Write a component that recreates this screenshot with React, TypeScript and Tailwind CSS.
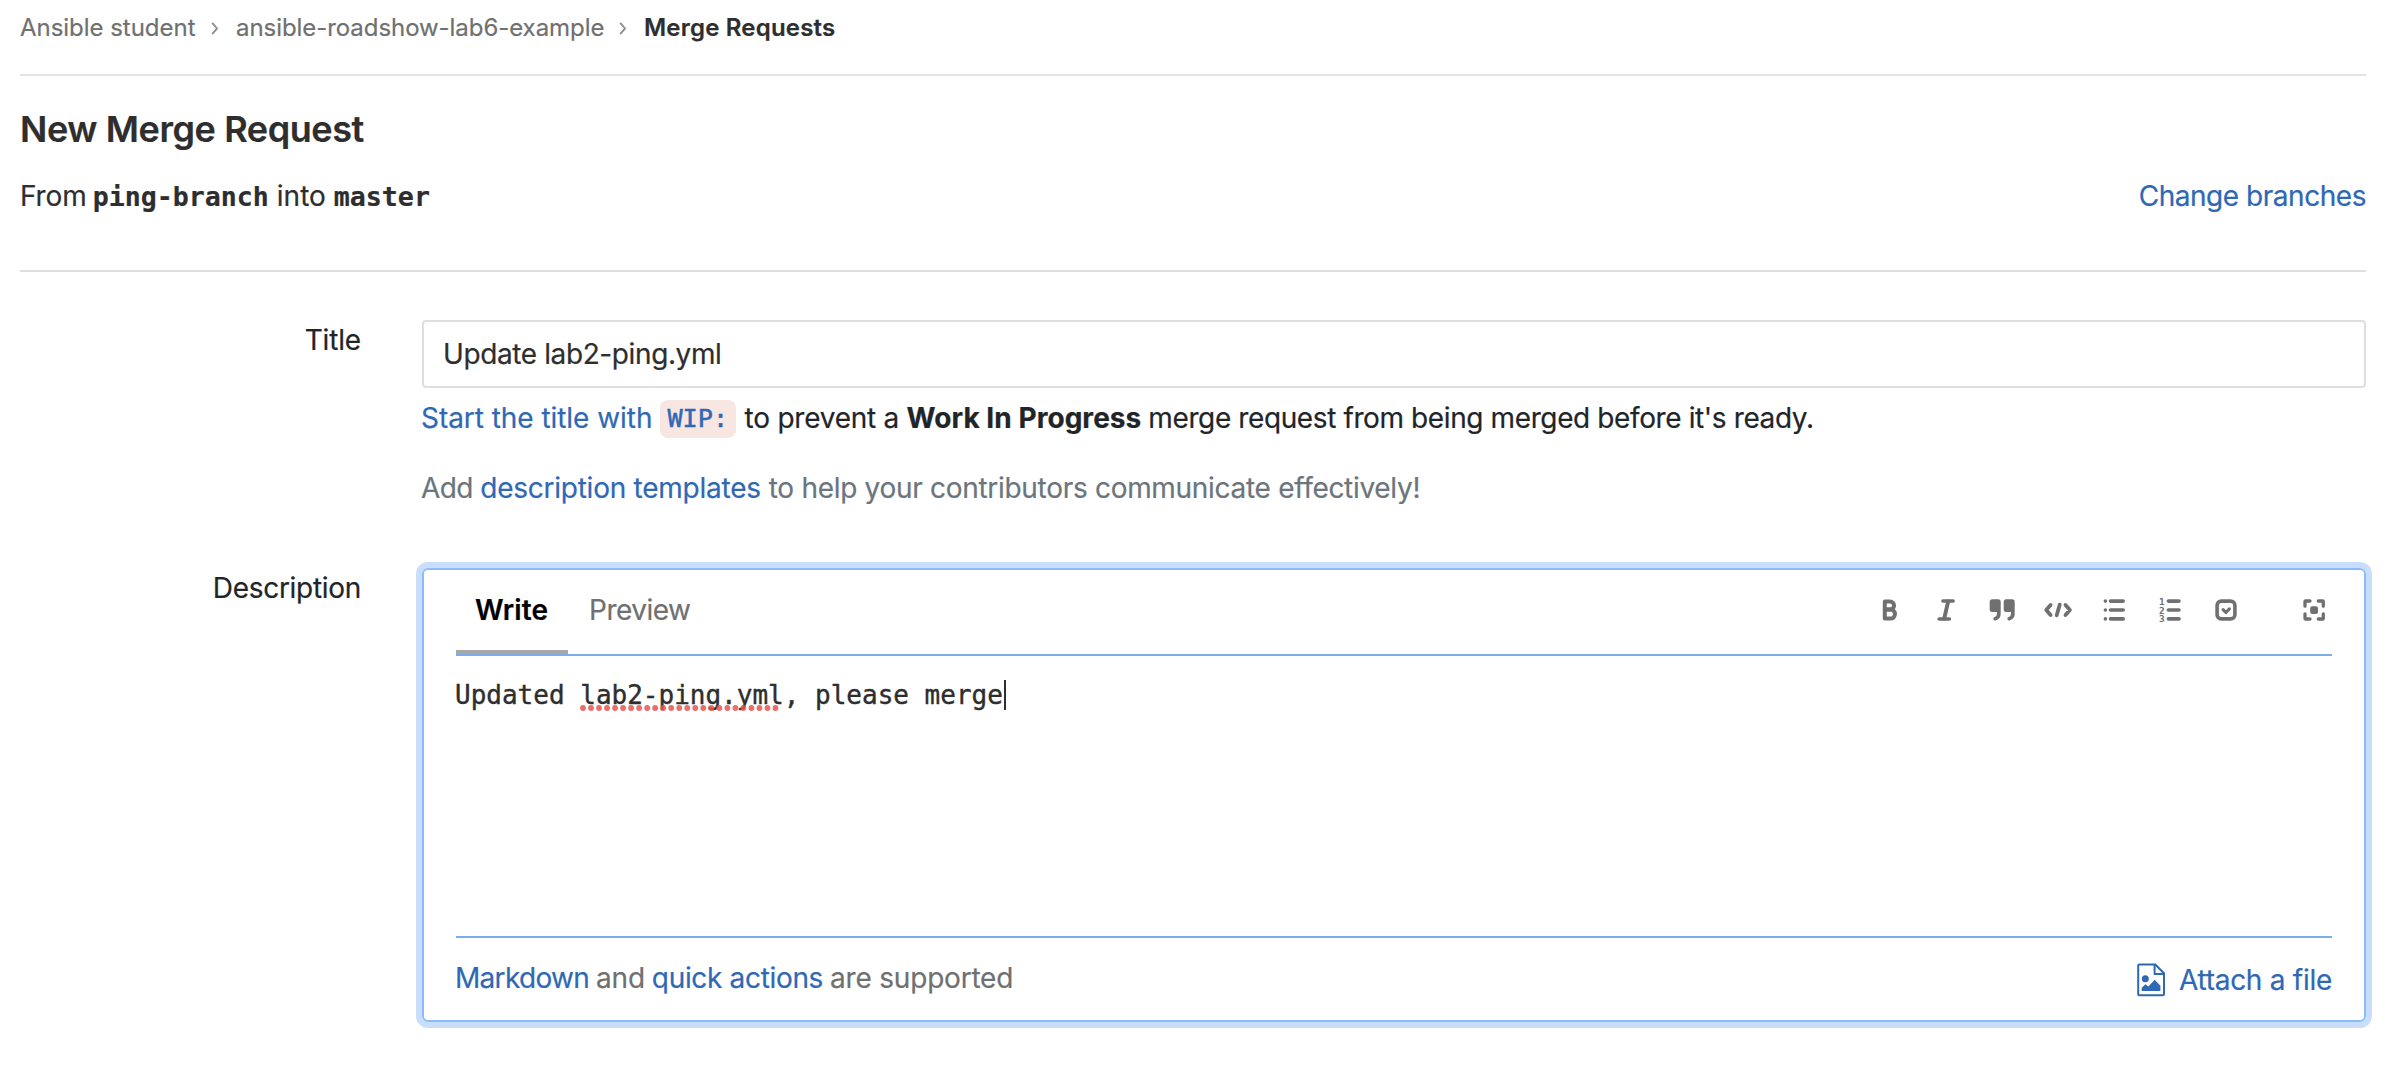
import type { ReactNode } from "react";

function Link({ className = "", children }: { className?: string; children: ReactNode }) {
  return (
    <a href="#" className={`text-[#2f68b4] ${className}`}>
      {children}
    </a>
  );
}

function Chevron({ className = "" }: { className?: string }) {
  return (
    <svg className={`shrink-0 ${className}`} width="8" height="13" viewBox="0 0 8 13" fill="none" stroke="#8f8f8f" strokeWidth="1.9">
      <path d="M1.2 0.8L6 6.5L1.2 12.2" />
    </svg>
  );
}

function Tool({ label, className = "", children }: { label: string; className?: string; children: ReactNode }) {
  return (
    <button type="button" aria-label={label} className={`text-[#707070] ${className}`}>
      <svg
        className="block overflow-visible"
        width="28"
        height="28"
        viewBox="0 0 28 28"
        fill="none"
        stroke="currentColor"
        strokeLinecap="round"
        strokeLinejoin="round"
      >
        {children}
      </svg>
    </button>
  );
}

const quoteMark =
  "M4.2 3.3h6a2.5 2.5 0 0 1 2.5 2.5v11.5a7.2 7.2 0 0 1-5 7.2a1.8 1.8 0 0 1-1-3.5a3.6 3.6 0 0 0 2.3-3.5V16H4.2A2.5 2.5 0 0 1 1.7 13.5V5.8a2.5 2.5 0 0 1 2.5-2.5z";

function Toolbar() {
  return (
    <div className="mt-[26px] mr-1 flex items-start gap-7">
      <Tool label="Bold">
        <g strokeWidth="4">
          <path d="M8.8 5.4h5.2a4 4 0 0 1 0 8.1H8.8z" />
          <path d="M8.8 13.6h5.8a4.4 4.5 0 0 1 0 9H8.8z" />
        </g>
      </Tool>
      <Tool label="Italic">
        <path d="M10.9 5.1H21.2M7.1 22.9H17.4" strokeWidth="3.5" />
        <path d="M16.2 5.4L12.2 22.6" strokeWidth="4" />
      </Tool>
      <Tool label="Quote">
        <g fill="currentColor" stroke="none">
          <path d={quoteMark} />
          <path d={quoteMark} transform="translate(14 0)" />
        </g>
      </Tool>
      <Tool label="Code">
        <path d="M6.6 8.9L2.2 14l4.4 5.1M21.5 8.9l4.4 5.1l-4.4 5.1M15.7 8.7L12.7 19.3" strokeWidth="3.8" />
      </Tool>
      <Tool label="Bulleted list">
        <path d="M10.5 5.1H23.2M10.5 14H23.2M10.5 22.9H23.2" strokeWidth="3.6" />
        <g fill="currentColor" stroke="none">
          <circle cx="5.4" cy="5.1" r="1.8" />
          <circle cx="5.4" cy="14" r="1.8" />
          <circle cx="5.4" cy="22.9" r="1.8" />
        </g>
      </Tool>
      <Tool label="Numbered list">
        <path d="M12.4 5.1H23M12.4 14H23M12.4 22.9H23" strokeWidth="3.6" />
        <g fill="currentColor" stroke="none" className="font-['DejaVu_Sans_Mono',monospace] text-[9.5px] font-bold">
          <text x="3" y="8.9">1</text>
          <text x="3" y="17.6">2</text>
          <text x="3" y="26.4">3</text>
        </g>
      </Tool>
      <Tool label="Task list">
        <rect x="5.1" y="5.1" width="17.8" height="17.8" rx="4.2" strokeWidth="3.6" />
        <path d="M11.1 13.6l2.8 2.9l3.5-3.6" strokeWidth="3.2" />
      </Tool>
      <Tool label="Full screen" className="ml-8">
        <path
          d="M5 10.2V5.4a.4.4 0 0 1 .4-.4h4.6M18.3 5h4.6a.4.4 0 0 1 .4.4v4.8M23.3 17.8v4.8a.4.4 0 0 1-.4.4h-4.6M10 23H5.4a.4.4 0 0 1-.4-.4v-4.8"
          strokeWidth="3.3"
        />
        <rect x="10.2" y="10.2" width="7.8" height="7.8" rx="2" fill="currentColor" stroke="none" />
      </Tool>
    </div>
  );
}

function FileImageIcon() {
  return (
    <svg className="block shrink-0" width="28" height="34" viewBox="0 0 28 34" fill="none" stroke="currentColor" strokeWidth="2" strokeLinejoin="round">
      <path d="M2.2 1.5H18.2L27 10.3V31.3a1 1 0 0 1-1 1H2.2a1 1 0 0 1-1-1V2.5a1 1 0 0 1 1-1z" />
      <path d="M17.6 1.8V11H26.7" />
      <circle cx="8.3" cy="15.8" r="3.5" fill="currentColor" stroke="none" />
      <path d="M4.7 28V24.8L8.4 21.2L11.4 23.6L17.7 16.8L23.4 22.8V28z" fill="currentColor" stroke="none" />
    </svg>
  );
}

export default function App() {
  return (
    <div className="min-h-[1082px] bg-white pr-6 pl-5 font-['Inter',sans-serif] text-[28px] leading-10 text-[#2e2e2e] [-webkit-text-stroke:0.2px]">
      <nav className="flex h-[76px] items-start border-b-2 border-[#e3e3e3] pt-[10px] text-[24px] leading-9 text-[#707070]">
        <span className="w-[175px] tracking-[-0.03px] whitespace-nowrap">Ansible student</span>
        <Chevron className="mt-3 ml-4" />
        <span className="ml-[17px] w-[368px] tracking-[-0.06px] whitespace-nowrap">ansible-roadshow-lab6-example</span>
        <Chevron className="mt-3 ml-[15px]" />
        <span className="ml-[17px] font-semibold tracking-[0.2px] text-[#2e2e2e]">Merge Requests</span>
      </nav>

      <header className="border-b-2 border-[#dfdfdf] pt-[29px]">
        <h1 className="text-[36px] leading-[48px] font-semibold tracking-[-0.41px]">New Merge Request</h1>
        <div className="mt-[23px] flex h-[94px] items-baseline justify-between">
          <div className="flex items-baseline">
            <span className="tracking-[-0.1px]">From</span>
            <span className="ml-[6px] font-['DejaVu_Sans_Mono',monospace] text-[26.6px] font-bold">ping-branch</span>
            <span className="ml-2">into</span>
            <span className="ml-2 font-['DejaVu_Sans_Mono',monospace] text-[26.6px] font-bold">master</span>
          </div>
          <Link className="tracking-[-0.46px]">Change branches</Link>
        </div>
      </header>

      <main className="pt-12">
        <div className="flex text-[#212529]">
          <label className="mr-[61px] w-[341px] shrink-0 text-right tracking-[-0.15px]">Title</label>
          <div className="flex-1">
            <div className="h-[68px] rounded-[4px] border-2 border-[#dfdfdf] pl-[19px] leading-[64px] tracking-[-0.39px] text-[#2e2e2e]">
              Update lab2-ping.yml
            </div>
            <p className="mt-[10px] -ml-px flex h-10 items-baseline whitespace-nowrap">
              <Link className="flex items-baseline">
                <span className="tracking-[-0.05px]">Start the title with</span>
                <code className="mt-[2px] ml-[7.5px] self-start rounded-[8px] bg-[#f8e6e3] px-[7.5px] font-['DejaVu_Sans_Mono',monospace] text-[25.2px] leading-[38px] [-webkit-text-stroke:0.5px]">
                  WIP:
                </code>
              </Link>
              <span className="ml-[9px] tracking-[-0.24px]">to prevent a</span>
              <strong className="ml-[7.5px] font-bold tracking-[0.05px]">Work In Progress</strong>
              <span className="ml-[7px] tracking-[-0.39px]">merge request from being merged before it's ready.</span>
            </p>
            <p className="mt-[30px] -ml-px flex items-baseline whitespace-nowrap text-[#6c757d]">
              <span className="tracking-[-0.6px]">Add</span>
              <Link className="ml-[7.5px] tracking-[-0.25px]">description templates</Link>
              <span className="ml-2 tracking-[-0.3px]">to help your contributors communicate effectively!</span>
            </p>
          </div>
        </div>

        <div className="mt-[60px] flex">
          <label className="mr-[61px] w-[341px] shrink-0 text-right tracking-[-0.3px] text-[#212529]">Description</label>
          <div className="h-[454px] flex-1 rounded-[6px] border-2 border-[#8bbcf9] px-8 shadow-[0_0_0_6px_#c9defd]">
            <div className="flex h-[86px] justify-between border-b-2 border-[#7aaeea]">
              <div className="flex whitespace-nowrap">
                <button type="button" className="flex h-[84px] w-28 items-start border-b-4 border-[#a7a7a7] pt-5 pl-[19px] font-semibold tracking-[0.15px] text-black">
                  Write
                </button>
                <button type="button" className="flex items-start pt-5 pl-[21px] tracking-[-0.5px] text-[#707070]">
                  Preview
                </button>
              </div>
              <Toolbar />
            </div>
            <div className="flex h-[282px] items-start border-b-2 border-[#7aaeea] pt-[19px] font-['DejaVu_Sans_Mono',monospace] text-[26px] whitespace-pre [-webkit-text-stroke:0.4px]">
              <span className="-ml-px">Updated </span>
              <span className="relative">
                lab2-ping.yml
                <svg className="absolute bottom-[4px] left-0" width="200" height="6" viewBox="0 0 200 6">
                  <path d="M3 3H200" stroke="#e8554d" strokeOpacity="0.85" strokeWidth="5.8" strokeLinecap="round" strokeDasharray="0 8.02" />
                </svg>
              </span>
              <span>, please merge</span>
              <span className="mt-[5px] ml-[0.8px] h-[30px] w-[2px] bg-[#2e2e2e]" />
            </div>
            <div className="flex justify-between whitespace-nowrap text-[#707070]">
              <div className="mt-5 -ml-px flex items-baseline">
                <Link className="tracking-[-0.7px]">Markdown</Link>
                <span className="ml-[7px] tracking-[-0.2px]">and</span>
                <Link className="ml-[7px] tracking-[-0.33px]">quick actions</Link>
                <span className="ml-[7px] tracking-[-0.2px]">are supported</span>
              </div>
              <Link className="mt-[22px] flex">
                <span className="mt-[3px] mr-[14px]">
                  <FileImageIcon />
                </span>
                <span className="tracking-[-0.27px]">Attach a file</span>
              </Link>
            </div>
          </div>
        </div>
      </main>
    </div>
  );
}
